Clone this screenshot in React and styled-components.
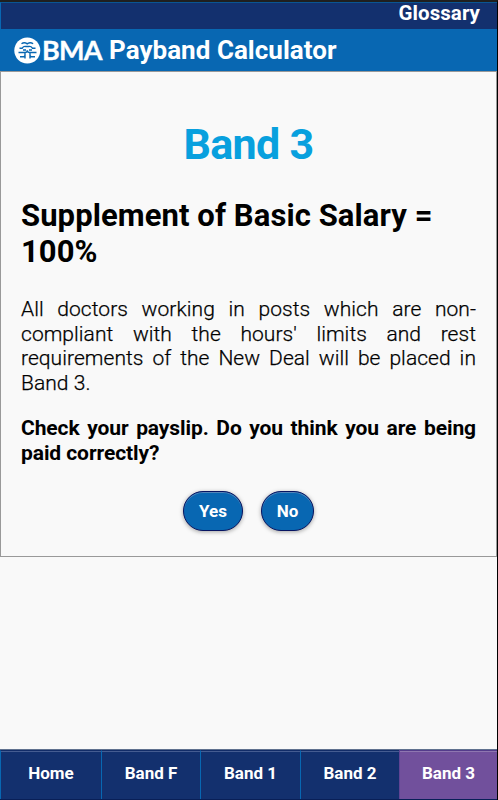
import React from "react";
import styled, { createGlobalStyle } from "styled-components";

const GlobalStyle = createGlobalStyle`
  * { box-sizing: border-box; }
  html, body { margin: 0; padding: 0; background: #f9f9f9; }
  body { font-family: Roboto, "Liberation Sans", sans-serif; color: #000; }
`;

const Screen = styled.div`
  width: 498px;
  height: 800px;
  display: flex;
  flex-direction: column;
  overflow: hidden;
  background: #f9f9f9;
  border-top: 2px solid #1f1f1f;
  border-right: 1px solid #000;
`;

const TopBar = styled.div`
  height: 27px;
  flex: none;
  display: flex;
  justify-content: flex-end;
  padding-right: 17px;
  background: #13306e;
  border-top: 1px solid #0a5592;
  border-left: 1px solid #0867b2;
`;

const GlossaryLink = styled.a`
  font-size: 20.5px;
  font-weight: 700;
  line-height: 20px;
  color: #fff;
  letter-spacing: 0.05px;
`;

const Header = styled.header`
  height: 42px;
  flex: none;
  display: flex;
  align-items: center;
  padding-left: 14px;
  background: #0867b2;
  color: #fff;
`;

const Emblem = styled.svg`
  display: block;
  width: 27px;
  height: 27px;
`;

const Wordmark = styled.span`
  width: 62px;
  margin-left: 1px;
  font-family: Lato, sans-serif;
  font-size: 27px;
  font-weight: 700;
  line-height: 42px;
  letter-spacing: -0.8px;
  -webkit-text-stroke: 0.3px #fff;
`;

const AppTitle = styled.span`
  margin-left: 5px;
  font-size: 26px;
  font-weight: 700;
  line-height: 42px;
  letter-spacing: 0.03px;
  white-space: nowrap;
`;

const Panel = styled.main`
  height: 486px;
  flex: none;
  border: 1px solid #999;
  padding: 0 20px;
`;

const Title = styled.h1`
  margin: 47px 0 0;
  font-size: 43px;
  line-height: 50px;
  font-weight: 700;
  letter-spacing: -0.7px;
  text-align: center;
  color: #08a0de;
`;

const Supplement = styled.h2`
  margin: 29px 0 0;
  font-size: 31px;
  line-height: 36px;
  font-weight: 700;
  letter-spacing: 0.08px;
`;

const Copy = styled.p`
  margin: ${(p) => p.$gap}px 0 0;
  font-size: 21px;
  line-height: 24.7px;
  font-weight: ${(p) => (p.$strong ? 700 : 300)};
  letter-spacing: ${(p) => (p.$strong ? -0.08 : 0.05)}px;
  -webkit-text-stroke: ${(p) => (p.$strong ? 0 : 0.25)}px #000;
  text-align: justify;
`;

const Actions = styled.div`
  display: flex;
  justify-content: center;
  gap: 18px;
  margin-top: 26px;
`;

const PillButton = styled.button`
  width: ${(p) => p.$width}px;
  height: 40px;
  padding: 0;
  border: 1px solid #071461;
  border-radius: 20px;
  background: #0867b2;
  box-shadow: 0 1px 4px rgba(0, 0, 0, 0.35), inset 0 1px 0 #5485b9;
  color: #fff;
  font: 700 17px/36px Roboto, sans-serif;
`;

const Tabs = styled.nav`
  height: 51px;
  flex: none;
  margin-top: auto;
  display: grid;
  grid-template-columns: 101px 99px 100px 99px 98px;
  border-top: 1px solid #60718f;
  border-bottom: 1px solid #091f57;
  background: #13306e;
`;

const Tab = styled.a`
  display: flex;
  justify-content: center;
  padding-top: 12px;
  border-top: 1px solid ${(p) => (p.$active ? "#543b8b" : "#122c68")};
  border-left: 1px solid ${(p) => (p.$active ? "#604494" : "#0867b2")};
  box-shadow: inset 0 1px 0 ${(p) => (p.$active ? "#8e76b0" : "#455c91")};
  background: ${(p) => (p.$active ? "#71509c" : "#13306e")};
  color: #fff;
  font-size: 17px;
  line-height: 20px;
  font-weight: 700;
`;

const tabs = ["Home", "Band F", "Band 1", "Band 2", "Band 3"];

function BmaEmblem() {
  return (
    <Emblem viewBox="0 0 27 27" fill="none" stroke="#0867b2" strokeWidth="1.4">
      <circle cx="13.3" cy="13.5" r="13" fill="#fff" stroke="none" />
      <path d="M7.500 6.700q2-1.400 4.300-.7q1.500.4 1.500 1.500q0-1.100 1.500-1.500q2.300-.7 4.300.7M5.500 11.200h2.700q1.500-2.200 3.500-1.700h3.200q2-.5 3.500 1.700H21.500M4.500 15.500h6.500q2.300 0 2.300-2.300q0 2.300 2.300 2.300H22.500M6 19.700h3.500q1.500 0 1.500-2M21 19.700h-3.500q-1.500 0-1.500-2M9 13h3M15 13h3M11 15.500v6M16 15.500v6" />
    </Emblem>
  );
}

export default function App() {
  return (
    <>
      <GlobalStyle />
      <Screen>
        <TopBar>
          <GlossaryLink>Glossary</GlossaryLink>
        </TopBar>
        <Header>
          <BmaEmblem />
          <Wordmark>BMA</Wordmark>
          <AppTitle>Payband Calculator</AppTitle>
        </Header>
        <Panel>
          <Title>Band 3</Title>
          <Supplement>Supplement of Basic Salary = 100%</Supplement>
          <Copy $gap={27}>
            All doctors working in posts which are non-compliant with the hours' limits and
            rest requirements of the New Deal will be placed in Band 3.
          </Copy>
          <Copy $gap={20} $strong>
            Check your payslip. Do you think you are being paid correctly?
          </Copy>
          <Actions>
            <PillButton $width={60}>Yes</PillButton>
            <PillButton $width={53}>No</PillButton>
          </Actions>
        </Panel>
        <Tabs>
          {tabs.map((label) => (
            <Tab key={label} $active={label === "Band 3"}>
              {label}
            </Tab>
          ))}
        </Tabs>
      </Screen>
    </>
  );
}
